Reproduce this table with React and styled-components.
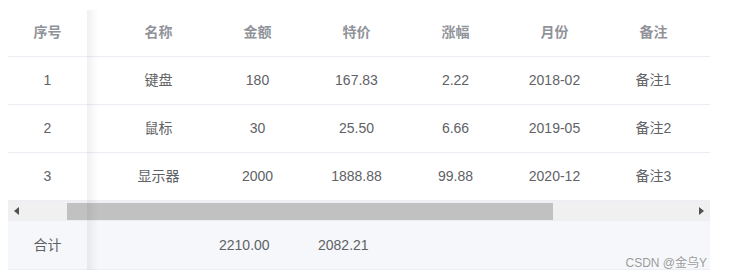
import React from "react";
import styled, { createGlobalStyle } from "styled-components";

const Global = createGlobalStyle`
  body {
    margin: 8px;
    background: #fff;
    font-family: "Liberation Sans", "Noto Sans CJK SC", sans-serif;
  }
`;

const Wrap = styled.div`
  position: relative;
  width: 702px;
`;

const Row = styled.div`
  display: grid;
  grid-template-columns: 79px 22px repeat(6, 99px) 1fr;
  height: ${(p) => (p.$tall ? "49px" : "48px")};
  border-bottom: 1px solid #ebeef5;
  box-sizing: border-box;
  background: ${(p) => (p.$footer ? "#f5f7fa" : "#fff")};
`;

const Cell = styled.div`
  display: flex;
  align-items: center;
  justify-content: ${(p) => (p.$left ? "flex-start" : "center")};
  padding-left: ${(p) => (p.$left ? "11px" : "0")};
  font-size: 14px;
  line-height: 23px;
  color: ${(p) => (p.$head ? "#909399" : "#606266")};
  font-weight: ${(p) => (p.$head ? 700 : 400)};
  white-space: nowrap;
  overflow: hidden;
`;

const ScrollBar = styled.div`
  display: grid;
  grid-template-columns: 17px 1fr 17px;
  height: 20px;
  background: #f0f0f0;
  border-bottom: 1px solid #ebeef5;
  box-sizing: border-box;
`;

const Btn = styled.div`
  display: flex;
  align-items: center;
  justify-content: center;
`;

const Track = styled.div`
  display: flex;
  align-items: center;
  padding-left: 42px;
`;

const Thumb = styled.div`
  width: 486px;
  height: 17px;
  margin-top: 1px;
  background: #c1c1c1;
`;

const Shadow = styled.div`
  position: absolute;
  left: 79px;
  top: 2px;
  bottom: 0;
  width: 11px;
  background: linear-gradient(to right, rgba(0, 0, 0, 0.06), rgba(0, 0, 0, 0));
  pointer-events: none;
`;

const Watermark = styled.div`
  position: absolute;
  right: 3px;
  bottom: -1px;
  font-size: 12px;
  line-height: 15px;
  color: #9a9a9a;
  text-shadow: 0 0 2px #fff;
  font-family: "Liberation Sans", "Noto Sans CJK SC", sans-serif;
`;

const Arrow = ({ dir }) => (
  <svg width="5" height="8" viewBox="0 0 5 8">
    {dir === "left" ? (
      <polygon points="5,0 0,4 5,8" fill="#505050" />
    ) : (
      <polygon points="0,0 5,4 0,8" fill="#505050" />
    )}
  </svg>
);

const head = ["名称", "金额", "特价", "涨幅", "月份", "备注"];
const rows = [
  ["1", "键盘", "180", "167.83", "2.22", "2018-02", "备注1"],
  ["2", "鼠标", "30", "25.50", "6.66", "2019-05", "备注2"],
  ["3", "显示器", "2000", "1888.88", "99.88", "2020-12", "备注3"],
];

export default function App() {
  return (
    <>
      <Global />
      <Wrap>
        <Row $tall>
          <Cell $head>序号</Cell>
          <Cell />
          {head.map((h) => (
            <Cell $head key={h}>{h}</Cell>
          ))}
          <Cell />
        </Row>
        {rows.map((r) => (
          <Row key={r[0]}>
            <Cell>{r[0]}</Cell>
            <Cell />
            {r.slice(1).map((c, i) => (
              <Cell key={i}>{c}</Cell>
            ))}
            <Cell />
          </Row>
        ))}
        <ScrollBar>
          <Btn><Arrow dir="left" /></Btn>
          <Track><Thumb /></Track>
          <Btn><Arrow dir="right" /></Btn>
        </ScrollBar>
        <Row $footer $tall>
          <Cell>合计</Cell>
          <Cell />
          <Cell $left />
          <Cell $left>2210.00</Cell>
          <Cell $left>2082.21</Cell>
          <Cell $left />
          <Cell $left />
          <Cell $left />
          <Cell />
        </Row>
        <Shadow />
        <Watermark>CSDN @金乌Y</Watermark>
      </Wrap>
    </>
  );
}
